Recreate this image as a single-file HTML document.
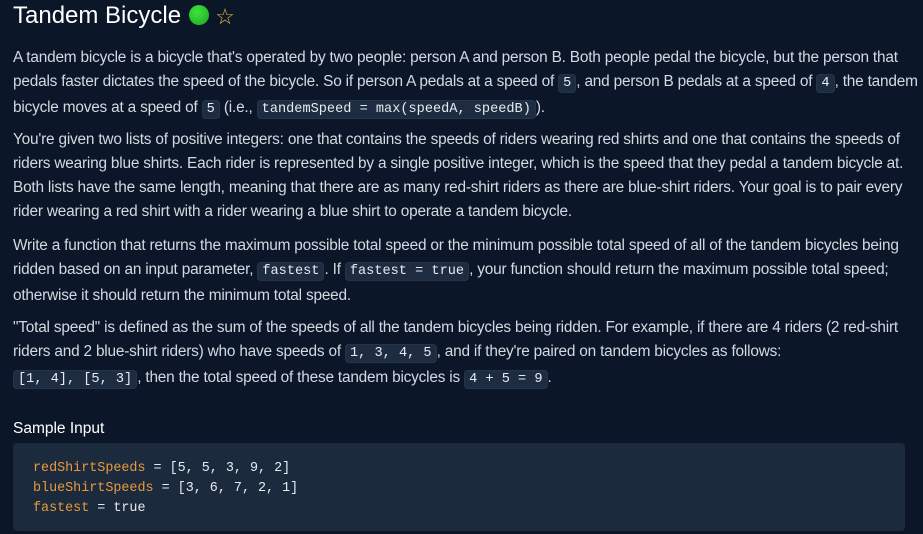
<!DOCTYPE html>
<html><head><meta charset="utf-8"><style>
body{margin:0;background:#0b1729;width:923px;height:534px;overflow:hidden;font-family:"Liberation Sans",sans-serif;color:#d3d9e1}
h1{position:absolute;left:13px;top:2px;margin:0;font-size:24px;font-weight:normal;color:#fff;white-space:nowrap}
.dot{display:inline-block;width:20px;height:20px;border-radius:50%;background:radial-gradient(circle at 40% 35%,#3fe23f,#19a81c);vertical-align:-2px;margin-left:8px}
.star{color:#e4b33a;font-size:22px;margin-left:6px;vertical-align:-1px}
p{position:absolute;left:13px;margin:0;font-size:15.4px;line-height:24px;white-space:nowrap;letter-spacing:-0.2px}
code{font-family:"Liberation Mono",monospace;font-size:13.6px;letter-spacing:0;background:#1d2c40;color:#e6ebf0;border-radius:4px;padding:1px 4px;border:1px solid #24354b}
h3{position:absolute;left:13px;top:420px;margin:0;font-size:15.5px;font-weight:normal;color:#fff}
.pre{position:absolute;left:13px;top:443px;width:892px;height:88px;background:#1c2a3d;border-radius:4px;font-family:"Liberation Mono",monospace;font-size:13.4px;line-height:20px;color:#e6ebf0;box-sizing:border-box;padding:16px 0 0 20px;white-space:pre}
.o{color:#e79a3c}
</style></head><body>
<h1>Tandem Bicycle<span class="dot"></span><span class="star">☆</span></h1>
<p style="top:46px">A tandem bicycle is a bicycle that's operated by two people: person A and person B. Both people pedal the bicycle, but the person that<br>pedals faster dictates the speed of the bicycle. So if person A pedals at a speed of <code>5</code>, and person B pedals at a speed of <code>4</code>, the tandem<br>bicycle moves at a speed of <code>5</code> (i.e., <code>tandemSpeed = max(speedA, speedB)</code>).</p>
<p style="top:128px">You're given two lists of positive integers: one that contains the speeds of riders wearing red shirts and one that contains the speeds of<br>riders wearing blue shirts. Each rider is represented by a single positive integer, which is the speed that they pedal a tandem bicycle at.<br>Both lists have the same length, meaning that there are as many red-shirt riders as there are blue-shirt riders. Your goal is to pair every<br>rider wearing a red shirt with a rider wearing a blue shirt to operate a tandem bicycle.</p>
<p style="top:234px">Write a function that returns the maximum possible total speed or the minimum possible total speed of all of the tandem bicycles being<br>ridden based on an input parameter, <code>fastest</code>. If <code>fastest = true</code>, your function should return the maximum possible total speed;<br>otherwise it should return the minimum total speed.</p>
<p style="top:316px">"Total speed" is defined as the sum of the speeds of all the tandem bicycles being ridden. For example, if there are 4 riders (2 red-shirt<br>riders and 2 blue-shirt riders) who have speeds of <code>1, 3, 4, 5</code>, and if they're paired on tandem bicycles as follows:<br><code>[1, 4], [5, 3]</code>, then the total speed of these tandem bicycles is <code>4 + 5 = 9</code>.</p>
<h3>Sample Input</h3>
<div class="pre"><span class="o">redShirtSpeeds</span> = [5, 5, 3, 9, 2]
<span class="o">blueShirtSpeeds</span> = [3, 6, 7, 2, 1]
<span class="o">fastest</span> = true</div>
</body></html>
